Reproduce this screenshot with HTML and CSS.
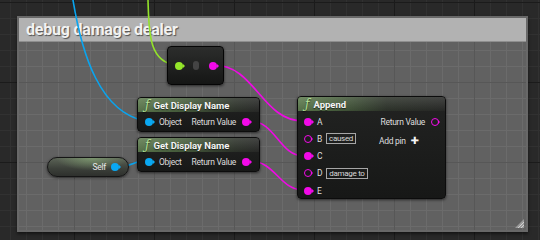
FILE: index.html
```html
<!DOCTYPE html>
<html lang="en">
<head>
    <meta charset="UTF-8">
    <meta name="viewport" content="width=device-width, initial-scale=1.0">
    <title>debug damage dealer</title>
    <link rel="stylesheet" href="styles.css">
</head>
<body>
    <div class="graph">
        <div class="comment">
            <div class="comment-title">debug damage dealer</div>
            <div class="comment-body"></div>
            <svg class="grip" width="9" height="9" viewBox="0 0 9 9">
                <path d="M9 0 L9 9 L0 9 Z" fill="#9a9a9a"/>
                <path d="M3 9 L9 3 M6 9 L9 6" stroke="#d0d0d0" stroke-width="1"/>
            </svg>
        </div>

        <!-- wires sit between the comment and the nodes -->
        <svg class="wires" width="540" height="240" viewBox="0 0 540 240">
            <g fill="none" stroke-width="1.6" stroke-linecap="round">
                <path d="M73 0 C82 55 100 112 145 121" stroke="#0aa4ee"/>
                <path d="M148 0 C149 30 148 62 176 65" stroke="#93e22a"/>
                <path d="M120 167 C131 167 133 161 144 161" stroke="#0aa4ee"/>
                <path d="M214 65 C255 65 262 121 303 121" stroke="#ee0ae4"/>
                <path d="M250 121 C275 121 280 156 303 156" stroke="#ee0ae4"/>
                <path d="M250 161 C275 161 280 190 303 190" stroke="#ee0ae4"/>
            </g>
        </svg>

        <div class="node knot">
            <span class="pin pin-bool"></span>
            <span class="knot-mid"></span>
            <span class="pin pin-str"></span>
        </div>

        <div class="node func name-a">
            <div class="node-head"><span class="fn-icon">ƒ</span>Get Display Name</div>
            <div class="node-row">
                <span class="port"><span class="pin pin-obj"></span>Object</span>
                <span class="port">Return Value<span class="pin pin-str"></span></span>
            </div>
        </div>

        <div class="node func name-b">
            <div class="node-head"><span class="fn-icon">ƒ</span>Get Display Name</div>
            <div class="node-row">
                <span class="port"><span class="pin pin-obj"></span>Object</span>
                <span class="port">Return Value<span class="pin pin-str"></span></span>
            </div>
        </div>

        <div class="node self-node">
            <span class="self-label">Self</span>
            <span class="pin pin-obj"></span>
        </div>

        <div class="node func append">
            <div class="node-head head-short"><span class="fn-icon">ƒ</span>Append</div>
            <div class="append-body">
                <div class="append-inputs">
                    <div class="in-row"><span class="pin pin-str"></span>A</div>
                    <div class="in-row"><span class="pin pin-ring"></span>B<span class="literal">caused</span></div>
                    <div class="in-row"><span class="pin pin-str"></span>C</div>
                    <div class="in-row"><span class="pin pin-ring"></span>D<span class="literal">damage to</span></div>
                    <div class="in-row"><span class="pin pin-str"></span>E</div>
                </div>
                <div class="append-outputs">
                    <div class="out-row">Return Value<span class="pin pin-ring"></span></div>
                    <div class="add-pin">Add pin <span class="plus">✚</span></div>
                </div>
            </div>
        </div>
    </div>
</body>
</html>
```

FILE: styles.css
```css
body {
    margin: 0;
    padding: 0;
    width: 540px;
    height: 240px;
    overflow: hidden;
    background-color: #282828;
    font-family: Roboto, "Liberation Sans", sans-serif;
}

.graph {
    position: relative;
    width: 540px;
    height: 240px;
    background-color: #292929;
    background-image:
        linear-gradient(to right, #1b1b1b 1px, transparent 1px),
        linear-gradient(to bottom, #1b1b1b 1px, transparent 1px),
        linear-gradient(to right, #313131 1px, transparent 1px),
        linear-gradient(to bottom, #313131 1px, transparent 1px);
    background-size: 80px 80px, 80px 80px, 16px 16px, 16px 16px;
    background-position: 74px 0, 0 82px, 10px 0, 0 2px;
}

/* comment box */
.comment {
    position: absolute;
    left: 17px;
    top: 16px;
    width: 511px;
    height: 216px;
    box-sizing: border-box;
    border: 2px solid #686868;
    display: flex;
    flex-direction: column;
    box-shadow: 0 2px 3px rgba(0, 0, 0, 0.5);
}

.comment-title {
    height: 23px;
    background-color: #b2b2b2;
    border-bottom: 1px solid #8e8e8e;
    color: #f2f2f2;
    font-size: 16px;
    font-weight: bold;
    line-height: 24px;
    padding-left: 7px;
    letter-spacing: -0.2px;
    white-space: nowrap;
    text-shadow: 1px 1px 1px rgba(0, 0, 0, 0.55);
}

/* grid inside the comment keeps the phase of the outer grid (body starts at 19,42) */
.comment-body {
    flex-grow: 1;
    background-color: #616161;
    background-image:
        linear-gradient(to right, #575757 1px, transparent 1px),
        linear-gradient(to bottom, #575757 1px, transparent 1px),
        linear-gradient(to right, #6b6b6b 1px, transparent 1px),
        linear-gradient(to bottom, #6b6b6b 1px, transparent 1px);
    background-size: 80px 80px, 80px 80px, 16px 16px, 16px 16px;
    background-position: 55px 0, 0 40px, 7px 0, 0 8px;
}

.grip {
    position: absolute;
    right: 2px;
    bottom: 2px;
}

.wires {
    position: absolute;
    left: 0;
    top: 0;
}

/* nodes */
.node {
    position: absolute;
    box-sizing: border-box;
    border: 1px solid #0c0c0c;
    border-radius: 4px;
    background: linear-gradient(to bottom, #222322, #171817);
    box-shadow: 0 1px 3px rgba(0, 0, 0, 0.6);
    color: #dedede;
    font-size: 8.5px;
    letter-spacing: -0.3px;
    white-space: nowrap;
}

.node-head {
    height: 14px;
    display: flex;
    align-items: center;
    gap: 4px;
    padding-left: 7px;
    border-radius: 3px 3px 0 0;
    background:
        linear-gradient(to bottom, rgba(255, 255, 255, 0.12), rgba(0, 0, 0, 0.1)),
        linear-gradient(to right, #5f7d50 0%, #4b6340 35%, #2f352c 80%, #2a2b29 100%);
    color: #f4f4f4;
    font-size: 9.5px;
    font-weight: bold;
    letter-spacing: 0;
    text-shadow: 0 1px 1px rgba(0, 0, 0, 0.6);
}

.head-short {
    background:
        linear-gradient(to bottom, rgba(255, 255, 255, 0.12), rgba(0, 0, 0, 0.1)),
        linear-gradient(to right, #5f7d50 0%, #4b6340 25%, #2f352c 60%, #2a2b29 100%);
}

.fn-icon {
    color: #b6e39a;
    font-family: "DejaVu Serif", serif;
    font-style: italic;
    font-size: 12px;
    font-weight: normal;
}

.node-row {
    height: 19px;
    display: flex;
    justify-content: space-between;
    align-items: center;
    padding: 0 9px 0 7px;
}

.port {
    display: flex;
    align-items: center;
    gap: 6px;
}

.name-a {
    left: 137px;
    top: 97px;
    width: 123px;
    height: 35px;
}

.name-b {
    left: 137px;
    top: 137px;
    width: 123px;
    height: 35px;
}

/* pins */
.pin {
    position: relative;
    display: inline-block;
    flex-shrink: 0;
    width: 8px;
    height: 8px;
    border-radius: 50%;
    box-sizing: border-box;
}

.pin::after {
    content: "";
    position: absolute;
    left: 100%;
    top: 50%;
    transform: translateY(-50%);
    border-left: 2px solid currentColor;
    border-top: 2px solid transparent;
    border-bottom: 2px solid transparent;
}

.pin-obj {
    background-color: #0aa8f2;
    color: #0aa8f2;
}

.pin-str {
    background-color: #f20ae8;
    color: #f20ae8;
}

.pin-bool {
    background-color: #95e62a;
    color: #95e62a;
}

.pin-ring {
    border: 1.5px solid #f20ae8;
    color: #f20ae8;
}

/* compact knot node */
.knot {
    left: 167px;
    top: 46px;
    width: 57px;
    height: 39px;
    display: flex;
    align-items: center;
    gap: 10px;
    padding-left: 7px;
    background: linear-gradient(to bottom, #2c2d2c, #151615);
    border-color: #050505;
}

.knot-mid {
    width: 6px;
    height: 9px;
    border-radius: 3px;
    background-color: #444;
}

/* self reference */
.self-node {
    left: 47px;
    top: 157px;
    width: 82px;
    height: 20px;
    border-radius: 10px;
    border-color: #151515;
    display: flex;
    justify-content: flex-end;
    align-items: center;
    gap: 5px;
    padding-right: 9px;
    background:
        radial-gradient(ellipse 45% 70% at 55% 0%, rgba(150, 190, 130, 0.55), transparent),
        linear-gradient(to bottom, #5b6356, #3b3f39 60%, #2e302d);
}

.self-label {
    color: #e8e8e8;
}

/* append node */
.append {
    left: 297px;
    top: 96px;
    width: 149px;
    height: 103px;
}

.append-body {
    display: flex;
    justify-content: space-between;
    padding-top: 2px;
}

.append-inputs {
    padding-left: 6px;
}

.in-row {
    height: 17.25px;
    display: flex;
    align-items: center;
    gap: 5px;
}

.literal {
    margin-left: -1px;
    padding: 0 2px;
    border: 1px solid #a6a6a6;
    line-height: 9px;
    font-size: 8px;
    color: #d8d8d8;
}

.append-outputs {
    padding-right: 6px;
    display: flex;
    flex-direction: column;
    align-items: flex-end;
}

.out-row {
    height: 17.25px;
    display: flex;
    align-items: center;
    gap: 6px;
}

.add-pin {
    margin-top: 2px;
    margin-right: 20px;
    height: 17px;
    display: flex;
    align-items: center;
    gap: 5px;
}

.plus {
    color: #f4f4f4;
    font-family: "DejaVu Sans", sans-serif;
    font-size: 10px;
    letter-spacing: 0;
}
```
